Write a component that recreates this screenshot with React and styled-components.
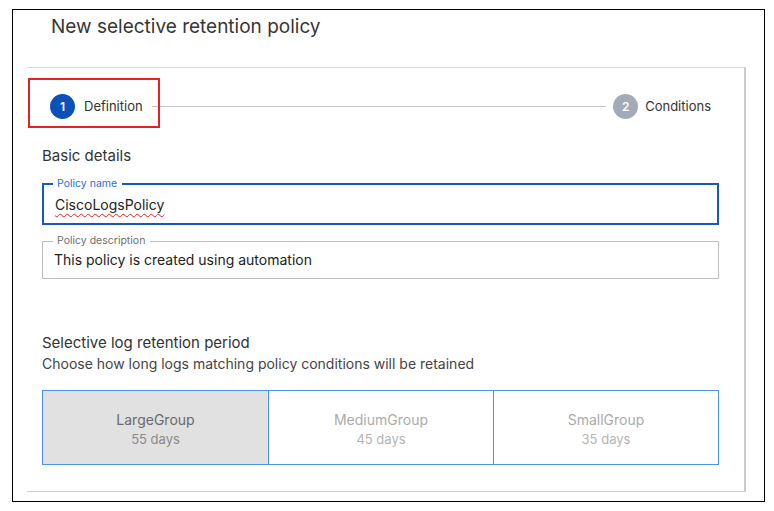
import styled, { createGlobalStyle } from 'styled-components';

const GlobalStyle = createGlobalStyle`
    html, body {
        margin: 0;
        background: #ffffff;
        font-family: Inter, "Liberation Sans", sans-serif;
        color: #333;
    }
    * {
        box-sizing: border-box;
    }
`;

const Frame = styled.div`
    margin: 9px 0 0 12px;
    width: 753px;
    height: 493px;
    border: 1px solid #000;
    display: flex;
    flex-direction: column;
`;

const Title = styled.h1`
    margin: 0;
    padding: 5px 0 0 38px;
    font-size: 19px;
    line-height: 24px;
    font-weight: 400;
    color: #363636;
`;

const Panel = styled.section`
    margin: 28px 0 0 14px;
    width: 719px;
    height: 425px;
    border-top: 1px solid #dcdcdc;
    border-right: 2px solid #cdcdcd;
    border-bottom: 1px solid #cdcdcd;
    padding: 0 25px 0 15px;
    display: flex;
    flex-direction: column;
`;

const Stepper = styled.ol`
    list-style: none;
    margin: 25px 8px 0 8px;
    padding: 0;
    height: 26px;
    display: flex;
    align-items: center;
`;

const Step = styled.li`
    position: relative;
    display: flex;
    align-items: center;
    gap: ${({ $done }) => ($done ? '9px' : '7px')};
    font-size: 13px;
    color: #333;
`;

const Highlight = styled.span`
    position: absolute;
    left: -22px;
    top: -16px;
    width: 132px;
    height: 50px;
    border: 2px solid #e3212b;
    pointer-events: none;
`;

const StepCircle = styled.span`
    width: 25px;
    height: 25px;
    border-radius: 50%;
    background: ${({ $active }) => ($active ? '#0d50b8' : '#a3abb9')};
    color: #fff;
    font-size: 12px;
    font-weight: 600;
    display: grid;
    place-items: center;
`;

const Connector = styled.span`
    flex: 1;
    height: 1px;
    background: #c6c6cc;
    margin: 0 7px 0 9px;
`;

const SectionTitle = styled.h2`
    margin: ${({ $top }) => $top} 0 0;
    font-size: 15px;
    line-height: 18px;
    font-weight: 400;
    color: #333;
`;

const Hint = styled.p`
    margin: 3px 0 0;
    font-size: 14px;
    line-height: 17px;
    color: #444;
`;

const Field = styled.fieldset`
    margin: ${({ $top }) => $top} 0 0;
    padding: ${({ $focused }) => ($focused ? '6px 11px 9px' : '4px 11px 9px')};
    border: ${({ $focused }) => ($focused ? '2px solid #1857c0' : '1px solid #bdbdbd')};
    min-width: 0;
`;

const Legend = styled.legend`
    margin-left: ${({ $focused }) => ($focused ? '-2px' : '-1px')};
    padding: 0 5px 0 4px;
    font-size: 10.5px;
    line-height: 12px;
    color: ${({ $focused }) => ($focused ? '#2a6fd6' : '#6f6f6f')};
`;

const Value = styled.div`
    font-size: 14px;
    line-height: 18px;
    color: #222;

    span {
        text-decoration: underline wavy #e0201a;
        text-decoration-thickness: 1px;
        text-underline-offset: 3px;
        text-decoration-skip-ink: none;
    }
`;

const Options = styled.div`
    margin-top: 18px;
    display: grid;
    grid-template-columns: repeat(3, 1fr);
    border: 1px solid #4b95e6;
    height: 75px;
`;

const Option = styled.button`
    border: none;
    border-left: ${({ $first }) => ($first ? 'none' : '1px solid #4b95e6')};
    background: ${({ $selected }) => ($selected ? '#e1e1e1' : '#fff')};
    font-family: inherit;
    display: flex;
    flex-direction: column;
    align-items: center;
    justify-content: center;
    gap: 3px;
    padding: 2px 0 0;
    cursor: pointer;
`;

const OptionName = styled.span`
    font-size: 14px;
    line-height: 17px;
    color: ${({ $selected }) => ($selected ? '#6a6a6a' : '#ababab')};
`;

const OptionDays = styled.span`
    font-size: 13px;
    line-height: 16px;
    color: ${({ $selected }) => ($selected ? '#8a8a8a' : '#b4b4b4')};
`;

const groups = [
    { name: 'LargeGroup', days: 55 },
    { name: 'MediumGroup', days: 45 },
    { name: 'SmallGroup', days: 35 },
];

const App = () => {
    const selected = 'LargeGroup';

    return (
        <>
            <GlobalStyle />
            <Frame>
                <Title>New selective retention policy</Title>
                <Panel>
                    <Stepper>
                        <Step $done>
                            <Highlight />
                            <StepCircle $active>1</StepCircle>
                            Definition
                        </Step>
                        <Connector />
                        <Step>
                            <StepCircle>2</StepCircle>
                            Conditions
                        </Step>
                    </Stepper>

                    <SectionTitle $top="28px">Basic details</SectionTitle>

                    <Field $focused $top="13px">
                        <Legend $focused>Policy name</Legend>
                        <Value><span>CiscoLogsPolicy</span></Value>
                    </Field>

                    <Field $top="10px">
                        <Legend>Policy description</Legend>
                        <Value>This policy is created using automation</Value>
                    </Field>

                    <SectionTitle $top="55px">Selective log retention period</SectionTitle>
                    <Hint>Choose how long logs matching policy conditions will be retained</Hint>

                    <Options>
                        {groups.map((g, i) => (
                            <Option key={g.name} $first={i === 0} $selected={g.name === selected}>
                                <OptionName $selected={g.name === selected}>{g.name}</OptionName>
                                <OptionDays $selected={g.name === selected}>{g.days} days</OptionDays>
                            </Option>
                        ))}
                    </Options>
                </Panel>
            </Frame>
        </>
    );
};

export default App;
